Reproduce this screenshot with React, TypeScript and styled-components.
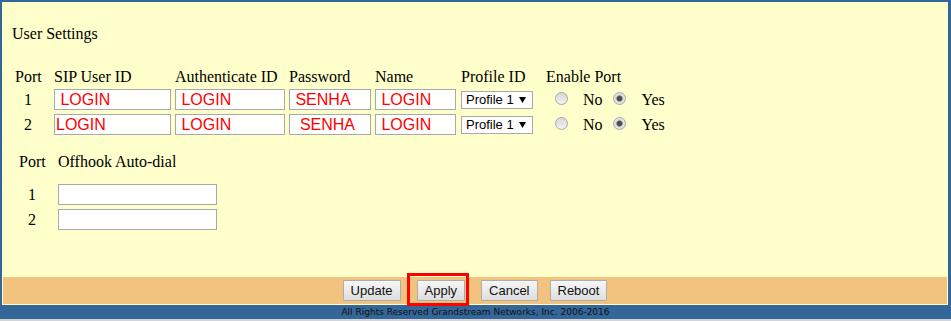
import * as React from "react";
import styled, { createGlobalStyle } from "styled-components";

const GlobalStyle = createGlobalStyle`
  html, body {
    margin: 0;
    padding: 0;
    background: #d4d4d4;
  }
  body {
    font-family: "Liberation Serif", "Times New Roman", serif;
    font-size: 16px;
    color: #000;
  }
`;

const Frame = styled.div`
  width: 951px;
  height: 319px;
  background: #336699;
  display: flex;
  flex-direction: column;
`;

const Panel = styled.div`
  margin: 2px 3px 0 2px;
  height: 303px;
  box-sizing: border-box;
  padding: 0 1px 1px 1px;
  background: #ffffcc;
  display: flex;
  flex-direction: column;
`;

const Content = styled.div`
  flex: 1;
  padding: 23px 0 0 9px;
`;

const Title = styled.div`
  height: 18px;
  line-height: 18px;
`;

const Grid = styled.div<{ $cols: string; $head: number; $top: number }>`
  display: grid;
  grid-template-columns: ${(p) => p.$cols};
  grid-template-rows: ${(p) => p.$head}px 25px 25px;
  align-items: center;
  margin-top: ${(p) => p.$top}px;
  line-height: 18px;
`;

const Head = styled.div<{ $pad?: number; $below?: number }>`
  padding-left: ${(p) => p.$pad ?? 0}px;
  padding-bottom: ${(p) => p.$below ?? 0}px;
  white-space: nowrap;
`;

const Num = styled.div<{ $pad: number }>`
  padding-left: ${(p) => p.$pad}px;
`;

const Field = styled.input<{ $w: number }>`
  width: ${(p) => p.$w}px;
  height: 21px;
  box-sizing: border-box;
  margin: 0;
  padding: 0 1px;
  border: 1px solid #a9a9a9;
  background: #fff;
  font-family: "Liberation Sans", Arial, sans-serif;
  font-size: 16px;
  color: #ff0000;
  outline: none;
`;

const SelectBox = styled.div`
  width: 72px;
  height: 18px;
  box-sizing: border-box;
  border: 1px solid #a9a9a9;
  background: #fff;
  display: flex;
  align-items: center;
  padding-right: 6px;
`;

const Select = styled.select`
  appearance: none;
  flex: 1;
  min-width: 0;
  border: none;
  background: transparent;
  margin: 0;
  padding: 0 0 0 4px;
  font-family: "Liberation Sans", Arial, sans-serif;
  font-size: 13px;
  color: #000;
  outline: none;
`;

const EnableCell = styled.div`
  display: flex;
  align-items: center;
  white-space: nowrap;
`;

const Radio = styled.input<{ $gap: number }>`
  appearance: none;
  width: 13px;
  height: 13px;
  box-sizing: border-box;
  margin: 0 0 3px ${(p) => p.$gap}px;
  border: 1px solid #a8a8a8;
  border-radius: 50%;
  background: linear-gradient(#d8d8d8, #f2f2f2);

  &:checked {
    background: radial-gradient(circle, #4f4f4f 0 2.4px, #9a9a9a 3px, #dcdcdc 3.6px, #eeeeee 100%);
  }
`;

const RadioLabel = styled.span<{ $gap: number }>`
  margin-left: ${(p) => p.$gap}px;
`;

const ButtonBar = styled.div`
  height: 27px;
  background: #f2c37e;
  display: flex;
  justify-content: center;
  align-items: center;
  gap: 12px;
`;

const Button = styled.button`
  height: 21px;
  box-sizing: border-box;
  margin: 0;
  padding: 0 7px;
  border: 1px solid #acacac;
  border-radius: 1px;
  background: linear-gradient(#f7f7f7, #dddddd);
  font-family: "Liberation Sans", Arial, sans-serif;
  font-size: 13px;
  color: #111;
`;

const Marked = styled.div`
  position: relative;
  margin: 0 4px;
  display: flex;
`;

const Highlight = styled.div`
  position: absolute;
  left: -10px;
  top: -7px;
  right: -4px;
  bottom: -5px;
  border: 3px solid #ff0000;
  pointer-events: none;
`;

const Footer = styled.div`
  height: 14px;
  line-height: 14px;
  text-align: center;
  font-family: "DejaVu Sans", Verdana, sans-serif;
  font-size: 9px;
  color: #111;
`;

type Port = { n: number; sip: string; auth: string; pass: string; name: string };

const ports: Port[] = [
  { n: 1, sip: " LOGIN", auth: " LOGIN", pass: " SENHA", name: " LOGIN" },
  { n: 2, sip: "LOGIN", auth: " LOGIN", pass: "  SENHA", name: " LOGIN" },
];

const Arrow = () => (
  <svg width="7" height="6" viewBox="0 0 7 6">
    <path d="M0 0 H7 L3.5 6 Z" fill="#000" />
  </svg>
);

export default function App() {
  return (
    <>
      <GlobalStyle />
      <Frame>
        <Panel>
          <Content>
            <Title>User Settings</Title>

            <Grid $cols="42px 121px 114px 86px 86px 85px auto" $head={20} $top={24}>
              <Head $pad={3}>Port</Head>
              <Head>SIP User ID</Head>
              <Head>Authenticate ID</Head>
              <Head>Password</Head>
              <Head>Name</Head>
              <Head>Profile ID</Head>
              <Head>Enable Port</Head>
              {ports.map((p) => (
                <React.Fragment key={p.n}>
                  <Num $pad={12}>{p.n}</Num>
                  <Field $w={117} defaultValue={p.sip} />
                  <Field $w={110} defaultValue={p.auth} />
                  <Field $w={82} defaultValue={p.pass} />
                  <Field $w={81} defaultValue={p.name} />
                  <SelectBox>
                    <Select defaultValue="1">
                      <option value="1">Profile 1</option>
                      <option value="2">Profile 2</option>
                    </Select>
                    <Arrow />
                  </SelectBox>
                  <EnableCell>
                    <Radio type="radio" name={`enable${p.n}`} $gap={9} />
                    <RadioLabel $gap={15}>No</RadioLabel>
                    <Radio type="radio" name={`enable${p.n}`} $gap={10} defaultChecked />
                    <RadioLabel $gap={16}>Yes</RadioLabel>
                  </EnableCell>
                </React.Fragment>
              ))}
            </Grid>

            <Grid $cols="46px auto" $head={30} $top={15}>
              <Head $pad={7} $below={10}>Port</Head>
              <Head $below={10}>Offhook Auto-dial</Head>
              {ports.map((p) => (
                <React.Fragment key={p.n}>
                  <Num $pad={16}>{p.n}</Num>
                  <Field $w={159} />
                </React.Fragment>
              ))}
            </Grid>
          </Content>

          <ButtonBar>
            <Button>Update</Button>
            <Marked>
              <Button>Apply</Button>
              <Highlight />
            </Marked>
            <Button>Cancel</Button>
            <Button>Reboot</Button>
          </ButtonBar>
        </Panel>
        <Footer>All Rights Reserved Grandstream Networks, Inc. 2006-2016</Footer>
      </Frame>
    </>
  );
}
